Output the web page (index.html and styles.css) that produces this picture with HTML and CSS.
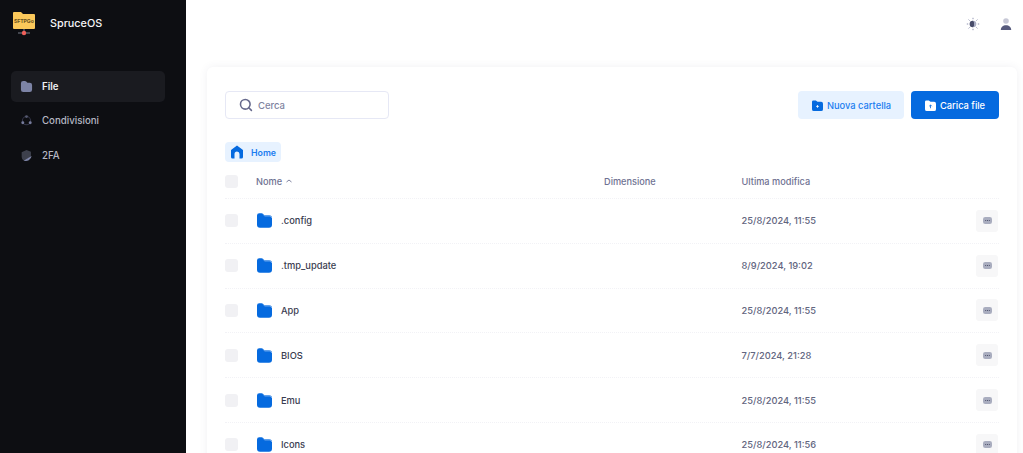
FILE: index.html
```html
<!DOCTYPE html>
<html lang="it">
<head>
<meta charset="utf-8">
<title>SpruceOS</title>
<link rel="stylesheet" href="styles.css">
</head>
<body>
<div class="app">
  <aside class="sidebar">
    <div class="brand">
      <div class="logo">
        <svg width="24" height="27" viewBox="0 0 24 27"><path d="M1 3a1 1 0 0 1 1-1h7l2 2h11a1 1 0 0 1 1 1v13a1 1 0 0 1-1 1H2a1 1 0 0 1-1-1z" fill="#fbc85a"/><path d="M6 23h12" stroke="#7a7f8a" stroke-width="1"/><path d="M12 19v3" stroke="#7a7f8a"/><circle cx="12" cy="23" r="2.200" fill="#f0605a"/></svg>
        <span class="logo-text">SFTPGo</span>
      </div>
      <span class="brand-name">SpruceOS</span>
    </div>
    <nav class="menu">
      <a class="menu-item active">
        <svg class="menu-icon" viewBox="0 0 14 14"><path d="M1 3.500A2.500 2.500 0 0 1 3.500 1h1.800c.6 0 1 .2 1.400.6L8 3h2.500A2.500 2.500 0 0 1 13 5.500v5a2.500 2.500 0 0 1-2.500 2.500h-7A2.500 2.500 0 0 1 1 10.500z" fill="#7d84a6"/></svg>
        File
      </a>
      <a class="menu-item">
        <svg class="menu-icon" viewBox="0 0 14 14"><circle cx="7" cy="7.200" r="4.400" fill="none" stroke="#34364a" stroke-width="1.100"/><circle cx="7" cy="2.800" r="1.500" fill="#565a70"/><circle cx="3" cy="9.500" r="1.600" fill="#767b9c"/><circle cx="11" cy="9.500" r="1.600" fill="#767b9c"/></svg>
        Condivisioni
      </a>
      <a class="menu-item">
        <svg class="menu-icon" viewBox="0 0 14 14"><path d="M7 1.200 11.800 3v3.500a6 6 0 0 1-.3 2L3.800 12.500A6 6 0 0 1 1.800 8.500V3.500z" fill="#3d404c"/><path d="M4 12.300 12.500 7.600a6 6 0 0 1-8.500 4.700z" fill="#7d84a6"/></svg>
        2FA
      </a>
    </nav>
  </aside>
  <div class="main">
    <header class="topbar">
      <svg class="top-icon" viewBox="0 0 14 14"><circle cx="7" cy="7" r="3.300" fill="#a9adc4"/><path d="M7 3.700a3.300 3.300 0 0 0 0 6.600 3.300 3.300 0 0 0 1-3.300 3.300 3.300 0 0 0-1-3.300z" fill="#484c6a"/><path d="M7 .8v1.400M7 11.800v1.400M.8 7h1.400M11.800 7h1.400M2.600 2.600l1 1M10.400 10.400l1 1M2.600 11.400l1-1M10.400 3.600l1-1" stroke="#9295b2" stroke-width="1"/></svg>
      <svg class="top-icon" viewBox="0 0 14 14"><circle cx="7" cy="4" r="2.800" fill="#c7c8d6"/><path d="M1.800 13c0-3 2.300-4.700 5.200-4.700s5.200 1.700 5.200 4.700z" fill="#565a7c"/></svg>
    </header>
    <section class="card">
      <div class="toolbar">
        <label class="search">
          <svg class="search-icon" viewBox="0 0 16 16"><circle cx="7.200" cy="7.200" r="5.500" fill="none" stroke="#66698c" stroke-width="1.800"/><path d="m11.200 11.200 3 3" stroke="#66698c" stroke-width="1.800" stroke-linecap="round"/></svg>
          <span>Cerca</span>
        </label>
        <div class="actions">
          <button class="btn btn-light">
            <svg class="btn-icon" viewBox="0 0 12 12"><path d="M0 2a1.500 1.500 0 0 1 1.500-1.500h2.700L6 2h4a2 2 0 0 1 2 2v6a2 2 0 0 1-2 2H2a2 2 0 0 1-2-2z" fill="#056adf"/><path d="M6 5.500v3M4.500 7h3" stroke="#fff" stroke-width=".9"/></svg>
            Nuova cartella
          </button>
          <button class="btn btn-primary">
            <svg class="btn-icon" viewBox="0 0 12 12"><path d="M0 2a1.500 1.500 0 0 1 1.500-1.500h2.700L6 2h4a2 2 0 0 1 2 2v6a2 2 0 0 1-2 2H2a2 2 0 0 1-2-2z" fill="#fff"/><path d="M6 9V5.500M4.600 6.800 6 5.400l1.400 1.400" stroke="#056adf" stroke-width=".9" fill="none"/></svg>
            Carica file
          </button>
        </div>
      </div>
      <div class="crumb">
        <svg class="home-icon" viewBox="0 0 14 14"><path d="M7 .5 13 5v7a1.500 1.500 0 0 1-1.500 1.500H9.500V9a2.500 2.500 0 0 0-5 0v4.500h-2A1.500 1.500 0 0 1 1 12V5z" fill="#056adf"/></svg>
        <span>Home</span>
      </div>
      <div class="row head">
        <span class="check"></span>
        <span class="col-name">Nome <svg class="sort" viewBox="0 0 8 6"><path d="m1.500 4 2.500-2 2.500 2" fill="none" stroke="#7e82a0" stroke-width="1"/></svg></span>
        <span class="col-size">Dimensione</span>
        <span class="col-date">Ultima modifica</span>
        <span class="col-act"></span>
      </div>
      <div class="row">
        <span class="check"></span>
        <span class="col-name"><svg class="folder" viewBox="0 0 15 15"><use href="#f"/></svg>.config</span>
        <span class="col-size"></span>
        <span class="col-date">25/8/2024, 11:55</span>
        <span class="col-act"><button class="more"><svg viewBox="0 0 10 10"><rect width="10" height="8" y="1" rx="2.500" fill="#a9adbf"/><path d="M2.500 5h1M4.500 5h1M6.500 5h1" stroke="#3e415c" stroke-width="1"/></svg></button></span>
      </div>
      <div class="row">
        <span class="check"></span>
        <span class="col-name"><svg class="folder" viewBox="0 0 15 15"><use href="#f"/></svg>.tmp_update</span>
        <span class="col-size"></span>
        <span class="col-date">8/9/2024, 19:02</span>
        <span class="col-act"><button class="more"><svg viewBox="0 0 10 10"><rect width="10" height="8" y="1" rx="2.500" fill="#a9adbf"/><path d="M2.500 5h1M4.500 5h1M6.500 5h1" stroke="#3e415c" stroke-width="1"/></svg></button></span>
      </div>
      <div class="row">
        <span class="check"></span>
        <span class="col-name"><svg class="folder" viewBox="0 0 15 15"><use href="#f"/></svg>App</span>
        <span class="col-size"></span>
        <span class="col-date">25/8/2024, 11:55</span>
        <span class="col-act"><button class="more"><svg viewBox="0 0 10 10"><rect width="10" height="8" y="1" rx="2.500" fill="#a9adbf"/><path d="M2.500 5h1M4.500 5h1M6.500 5h1" stroke="#3e415c" stroke-width="1"/></svg></button></span>
      </div>
      <div class="row">
        <span class="check"></span>
        <span class="col-name"><svg class="folder" viewBox="0 0 15 15"><use href="#f"/></svg>BIOS</span>
        <span class="col-size"></span>
        <span class="col-date">7/7/2024, 21:28</span>
        <span class="col-act"><button class="more"><svg viewBox="0 0 10 10"><rect width="10" height="8" y="1" rx="2.500" fill="#a9adbf"/><path d="M2.500 5h1M4.500 5h1M6.500 5h1" stroke="#3e415c" stroke-width="1"/></svg></button></span>
      </div>
      <div class="row">
        <span class="check"></span>
        <span class="col-name"><svg class="folder" viewBox="0 0 15 15"><use href="#f"/></svg>Emu</span>
        <span class="col-size"></span>
        <span class="col-date">25/8/2024, 11:55</span>
        <span class="col-act"><button class="more"><svg viewBox="0 0 10 10"><rect width="10" height="8" y="1" rx="2.500" fill="#a9adbf"/><path d="M2.500 5h1M4.500 5h1M6.500 5h1" stroke="#3e415c" stroke-width="1"/></svg></button></span>
      </div>
      <div class="row">
        <span class="check"></span>
        <span class="col-name"><svg class="folder" viewBox="0 0 15 15"><use href="#f"/></svg>Icons</span>
        <span class="col-size"></span>
        <span class="col-date">25/8/2024, 11:56</span>
        <span class="col-act"><button class="more"><svg viewBox="0 0 10 10"><rect width="10" height="8" y="1" rx="2.500" fill="#a9adbf"/><path d="M2.500 5h1M4.500 5h1M6.500 5h1" stroke="#3e415c" stroke-width="1"/></svg></button></span>
      </div>
    </section>
  </div>
</div>
<svg class="defs" width="0" height="0"><defs><g id="f"><path d="M0 2.500A2.300 2.300 0 0 1 2.300.2h2.200c.7 0 1.200.3 1.700.8l1.300 1.300h4.500A3 3 0 0 1 15 5.300v6.500a3 3 0 0 1-3 3H3a3 3 0 0 1-3-3z" fill="#056adf"/><path d="M5.500.8 7.800 3h4.500A2.500 2.500 0 0 1 14.800 5" fill="none" stroke="#a9cdf6" stroke-width=".6"/></g></defs></svg>
</body>
</html>
```

FILE: styles.css
```css
* { box-sizing: border-box; }
html, body { margin: 0; height: 100%; overflow: hidden; }
body { font-family: Inter, "Liberation Sans", sans-serif; background: #fff; }
.defs { position: absolute; }
.app { display: flex; height: 453px; }
.sidebar { width: 186px; flex: none; background: #0d0e12; padding: 0 21px 0 11px; }
.brand { display: flex; align-items: center; gap: 14px; height: 46px; padding-left: 1px; }
.logo { position: relative; width: 24px; height: 27px; }
.logo svg { display: block; }
.logo-text { position: absolute; left: 2px; top: 7px; font-size: 5.200px; font-weight: 700; letter-spacing: -.1px; color: #6b5320; line-height: 8px; }
.brand-name { font-size: 10.800px; font-weight: 500; color: #f5f5f7; }
.menu { display: flex; flex-direction: column; gap: 3.300px; margin-top: 25px; }
.menu-item { display: flex; align-items: center; gap: 9px; height: 31px; padding-left: 9px; border-radius: 5px; font-size: 9.700px; font-weight: 500; color: #b5b7c3; }
.menu-item.active { background: #1a1b20; color: #f0f0f3; font-weight: 600; }
.menu-icon { width: 13px; height: 13px; flex: none; }
.main { flex: 1; min-width: 0; background: #fff; }
.topbar { display: flex; justify-content: flex-end; align-items: center; gap: 19px; height: 47px; padding-right: 10.500px; }
.top-icon { width: 14px; height: 14px; }
.card { margin: 20px 6px 0 21px; background: #fff; border-radius: 6px; box-shadow: 0 0 8px rgba(70, 70, 100, .08); padding: 24px 18px 0; }
.toolbar { display: flex; justify-content: space-between; height: 28px; }
.search { display: flex; align-items: center; gap: 5px; width: 164px; height: 28px; border: 1px solid #e6e8f5; border-radius: 4px; padding-left: 13px; font-size: 9.500px; font-weight: 500; color: #80839f; }
.search-icon { width: 14px; height: 14px; }
.actions { display: flex; gap: 7px; }
.btn { display: flex; align-items: center; gap: 4px; height: 28px; border: 0; border-radius: 4px; padding: 0 0 0 14px; font: 500 9.300px Inter, sans-serif; white-space: nowrap; }
.btn-light { width: 106px; background: #e7f2ff; color: #1b7df0; }
.btn-primary { width: 88px; background: #056adf; color: #fff; }
.btn-icon { width: 11px; height: 11px; flex: none; }
.crumb { display: inline-flex; align-items: center; gap: 7px; height: 20px; margin-top: 23px; padding: 0 5px; border-radius: 4px; background: #e7f2ff; font-size: 8.800px; font-weight: 600; color: #1b7df0; vertical-align: top; }
.home-icon { width: 14px; height: 14px; }
.row { display: flex; align-items: center; height: 44.800px; border-top: 1px dotted #f2f2f6; font-size: 9.300px; font-weight: 500; color: #4a4c60; }
.row.head { height: 36px; padding-top: 2px; border-top: 0; color: #6f7292; font-size: 9.200px; }
.check { width: 13px; height: 13px; flex: none; border-radius: 3px; background: #f1f1f4; }
.col-name { display: flex; align-items: center; flex: none; width: 348px; margin-left: 18px; gap: 3px; }
.row:not(.head) .col-name { padding-left: 1px; gap: 9px; color: #3a3c50; }
.col-size { width: 137.500px; flex: none; }
.col-date { flex: 1; color: #626580; }
.head .col-date, .head .col-size { color: #6f7292; }
.col-act { width: 22px; flex: none; margin-right: 1px; }
.folder { width: 15px; height: 15px; flex: none; }
.sort { width: 8px; height: 6px; }
.more { display: flex; align-items: center; justify-content: center; width: 22px; height: 22px; border: 0; border-radius: 3px; background: #f7f7f8; padding: 0; }
.more svg { width: 9px; height: 9px; }
```
